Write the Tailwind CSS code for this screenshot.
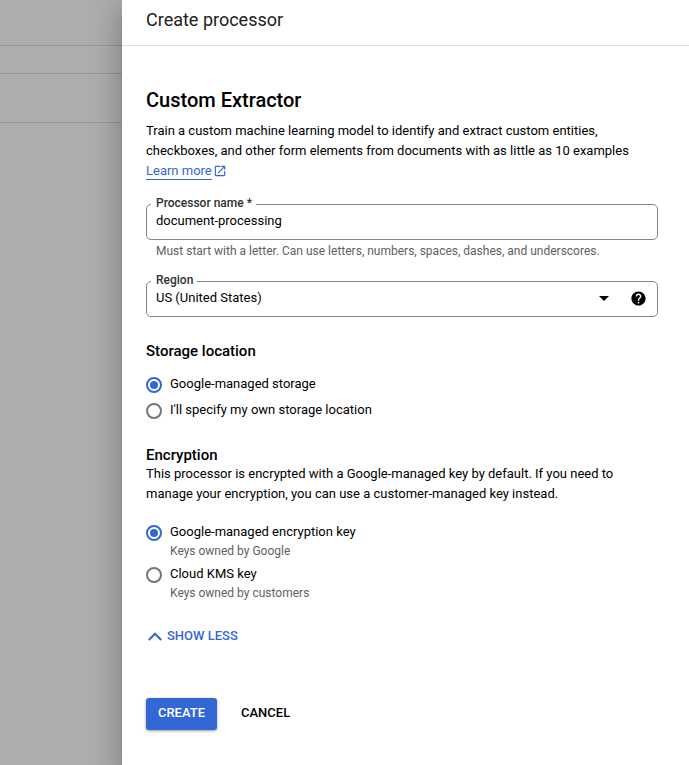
<!DOCTYPE html>
<html lang="en">
<head>
<meta charset="utf-8">
<title>Create processor</title>
<script src="https://cdn.jsdelivr.net/npm/@tailwindcss/browser@4"></script>
</head>
<body class="flex h-[765px] w-[689px] overflow-hidden bg-[#adadad] font-[Roboto,sans-serif] text-[13px] leading-5 text-black">
<div class="w-[122px] shrink-0">
  <div class="h-[46px] border-b border-[#979797]"></div>
  <div class="h-[28px] border-b border-[#979797]"></div>
  <div class="h-[49px] border-b border-[#979797]"></div>
</div>
<main class="relative h-[765px] w-[567px] bg-white shadow-[0_8px_10px_-5px_rgba(0,0,0,0.2),0_16px_24px_2px_rgba(0,0,0,0.14),0_6px_30px_5px_rgba(0,0,0,0.12)]">
  <header class="h-[46px] border-b border-[#dcdcdc] pl-6 pt-2">
    <h1 class="text-[18px] leading-6 text-[#202020]"><span>Create processor</span></h1>
  </header>
  <div class="pl-6 pr-[31px] pt-[42px]">
    <h2 class="text-[20px] font-medium leading-6"><span>Custom Extractor</span></h2>
    <p class="mt-[9px] whitespace-nowrap">Train a custom machine learning model to identify and extract custom entities,<br>checkboxes, and other form elements from documents with as little as 10 examples</p>
    <a class="flex h-5 items-start text-[#3367d6]"><span class="h-[19px] border-b border-[#3367d6]">Learn more</span>
      <svg class="ml-px mt-[3px] size-[14px]" viewBox="0 0 24 24" fill="currentColor"><path d="M19 19H5V5h7V3H5a2 2 0 0 0-2 2v14a2 2 0 0 0 2 2h14c1.1 0 2-.9 2-2v-7h-2v7zM14 3v2h3.59l-9.83 9.83 1.41 1.41L19 6.41V10h2V3h-7z"/></svg>
    </a>
    <div class="relative mt-[23px] h-9 rounded-[5px] border border-[#80868b] pl-[9px] pt-[6px]">
      <span class="absolute left-1 top-[-12px] bg-white pl-[5px] pr-1 text-[12px] font-medium text-[#303134]">Processor name *</span>
      <span>document-processing</span>
    </div>
    <p class="mt-[1px] pl-[10px] text-[12px] text-[#616161]">Must start with a letter. Can use letters, numbers, spaces, dashes, and underscores.</p>
    <div class="relative mt-5 flex h-9 items-start rounded-[5px] border border-[#80868b] pl-[9px] pt-[6px]">
      <span class="absolute left-1 top-[-12px] bg-white pl-[5px] pr-1 text-[12px] font-medium text-[#303134]">Region</span>
      <span>US (United States)</span>
      <svg class="ml-auto mt-2 h-[5px] w-[10px]" viewBox="0 0 10 5"><path d="M0 0h10L5 5z"/></svg>
      <svg class="ml-[20.5px] mr-[10.5px] mt-[1.5px] size-[17px]" viewBox="0 0 24 24"><path d="M12 2C6.48 2 2 6.48 2 12s4.48 10 10 10 10-4.48 10-10S17.52 2 12 2zm1 17h-2v-2h2v2zm2.07-7.75-.9.92C13.45 12.9 13 13.5 13 15h-2v-.5c0-1.1.45-2.1 1.17-2.83l1.24-1.26c.37-.36.59-.86.59-1.41 0-1.1-.9-2-2-2s-2 .9-2 2H8c0-2.21 1.79-4 4-4s4 1.79 4 4c0 .88-.36 1.68-.93 2.25z"/></svg>
    </div>
    <h3 class="mt-6 text-[15px] font-medium"><span>Storage location</span></h3>
    <div class="mt-[13px] flex items-start gap-2">
      <span class="mt-[3px] flex size-4 items-center justify-center rounded-full border-2 border-[#3367d6]"><i class="size-2 rounded-full bg-[#3367d6]"></i></span>
      <span>Google-managed storage</span>
    </div>
    <div class="mt-[6px] flex items-start gap-2">
      <span class="mt-[3px] size-4 rounded-full border-2 border-[#757575]"></span>
      <span>I'll specify my own storage location</span>
    </div>
    <h3 class="mt-[25px] text-[15px] font-medium"><span>Encryption</span></h3>
    <p class="-mt-[1px] whitespace-nowrap">This processor is encrypted with a Google-managed key by default. If you need to<br>manage your encryption, you can use a customer-managed key instead.</p>
    <div class="mt-[18px] flex items-start gap-2">
      <span class="mt-[3px] flex size-4 items-center justify-center rounded-full border-2 border-[#3367d6]"><i class="size-2 rounded-full bg-[#3367d6]"></i></span>
      <div><p>Google-managed encryption key</p><p class="-mt-px text-[12px] text-[#616161]">Keys owned by Google</p></div>
    </div>
    <div class="mt-[3px] flex items-start gap-2">
      <span class="mt-[3px] size-4 rounded-full border-2 border-[#757575]"></span>
      <div><p>Cloud KMS key</p><p class="-mt-px text-[12px] text-[#616161]">Keys owned by customers</p></div>
    </div>
    <div class="mt-[23px] flex items-center font-medium text-[#3367d6]">
      <svg class="ml-[2px] mr-[5px] h-[9px] w-[14px]" viewBox="0 0 14 9" fill="none" stroke="currentColor" stroke-width="2.1"><path d="M.8 8 7 1.8 13.2 8"/></svg>
      <span>SHOW LESS</span>
    </div>
    <div class="mt-[52px] flex h-8 font-medium">
      <div class="h-8 w-[71px] rounded-[3px] bg-[#3367d6] pt-[5px] text-center text-white shadow-[0_1px_3px_rgba(0,0,0,0.4)]"><span>CREATE</span></div>
      <span class="ml-6 pt-[5px]">CANCEL</span>
    </div>
  </div>
</main>
</body>
</html>
